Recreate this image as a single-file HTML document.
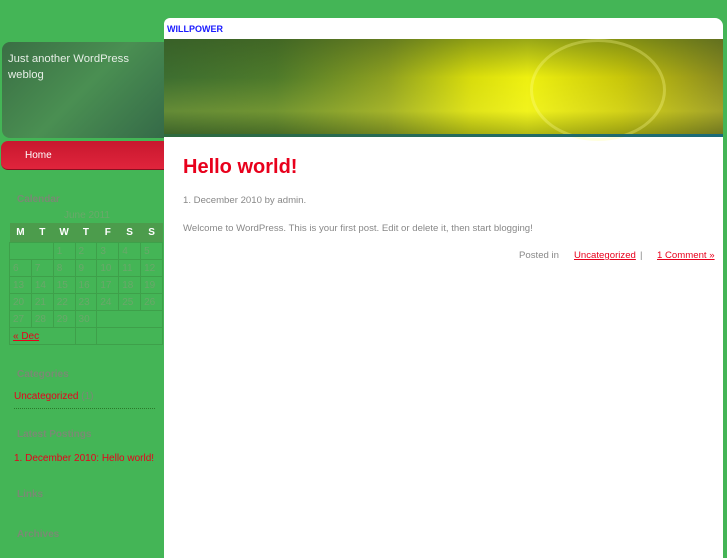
<!DOCTYPE html>
<html><head><style>
body{margin:0;width:727px;height:545px;background:#44b556;font-family:"Liberation Sans",sans-serif;position:relative;overflow:hidden}
.a{position:absolute}
.panel{left:164px;top:18px;width:559px;height:540px;background:#fff;border-top-right-radius:8px;border-top-left-radius:6px}
.hdr{left:164px;top:39px;width:559px;height:96px;background:linear-gradient(90deg,#3d6e30 0%,#4e7a2a 20%,#8ea020 40%,#d8dc0c 55%,#eef010 65%,#c8c60a 82%,#8a8a20 100%)}
.hdr2{left:164px;top:39px;width:559px;height:96px;background:linear-gradient(180deg,rgba(50,80,30,.45),rgba(0,0,0,0) 40%,rgba(255,255,80,.2) 75%,rgba(60,80,30,.35))}
.line{left:164px;top:134px;width:559px;height:3px;background:linear-gradient(90deg,#2e6a3e,#1a6a7a)}
.tag{left:2px;top:42px;width:162px;height:96px;border-radius:8px 0 0 8px;background:linear-gradient(135deg,#3a6e44,#4a8f52 50%,#356a48)}
.home{left:1px;top:141px;width:163px;height:28px;border-radius:7px 0 0 7px;background:linear-gradient(#c8182e,#e0243c);border-bottom:1px solid #8a1020}
.g{color:#7a8a74;font-size:10px;font-weight:bold}
table{border-collapse:collapse;font-size:10px;color:#6aa86a}
td{border:1px solid #3ea04a;height:16px;width:20px;padding:0 0 0 3px}
th{background:#4c9c4c;color:#fff;height:17px;font-size:10px}
.r{color:#e8001c}
.p{font-size:9.6px;color:#888}
</style></head><body>
<div class="a panel"></div>
<div class="a" style="left:167px;top:24px;font-size:9px;font-weight:bold;color:#1a1aff">WILLPOWER</div>
<div class="a hdr"></div><div class="a hdr2"></div>
<div class="a" style="left:530px;top:39px;width:130px;height:96px;border-radius:50%;border:3px solid rgba(255,255,150,.3)"></div>
<div class="a line"></div>
<div class="a tag"></div>
<div class="a" style="left:8px;top:51px;font-size:11.3px;line-height:16px;color:#e6eee6;width:155px">Just another WordPress weblog</div>
<div class="a home"></div>
<div class="a" style="left:25px;top:150px;font-size:10px;color:#fff">Home</div>
<div class="a g" style="left:17px;top:194px">Calendar</div>
<div class="a" style="left:64px;top:210px;font-size:10px;color:#6aa86a">June 2011</div>
<table class="a" style="left:9px;top:223px;width:154px">
<tr><th>M</th><th>T</th><th>W</th><th>T</th><th>F</th><th>S</th><th>S</th></tr>
<tr><td colspan="2"></td><td>1</td><td>2</td><td>3</td><td>4</td><td>5</td></tr>
<tr><td>6</td><td>7</td><td>8</td><td>9</td><td>10</td><td>11</td><td>12</td></tr>
<tr><td>13</td><td>14</td><td>15</td><td>16</td><td>17</td><td>18</td><td>19</td></tr>
<tr><td>20</td><td>21</td><td>22</td><td>23</td><td>24</td><td>25</td><td>26</td></tr>
<tr><td>27</td><td>28</td><td>29</td><td>30</td><td colspan="3"></td></tr>
<tr><td colspan="3" class="r" style="text-decoration:underline">« Dec</td><td></td><td colspan="3"></td></tr>
</table>
<div class="a g" style="left:17px;top:369px">Categories</div>
<div class="a" style="left:14px;top:391px;font-size:10px;color:#e8001c;width:141px;border-bottom:1px dotted #2a7a2a;padding-bottom:6px">Uncategorized <span style="color:#7a8a74">(1)</span></div>
<div class="a g" style="left:17px;top:429px">Latest Postings</div>
<div class="a r" style="left:14px;top:453px;font-size:10px">1. December 2010: Hello world!</div>
<div class="a g" style="left:17px;top:489px">Links</div>
<div class="a g" style="left:17px;top:529px">Archives</div>
<div class="a" style="left:183px;top:156px;font-size:20px;font-weight:bold;color:#e8001c">Hello world!</div>
<div class="a p" style="left:183px;top:195px">1. December 2010 by admin.</div>
<div class="a p" style="left:183px;top:223px">Welcome to WordPress. This is your first post. Edit or delete it, then start blogging!</div>
<div class="a p" style="left:519px;top:250px">Posted in</div>
<div class="a p" style="left:574px;top:250px;color:#e8001c;text-decoration:underline">Uncategorized</div>
<div class="a p" style="left:640px;top:250px">|</div>
<div class="a p" style="left:657px;top:250px;color:#e8001c;text-decoration:underline">1 Comment »</div>
</body></html>
